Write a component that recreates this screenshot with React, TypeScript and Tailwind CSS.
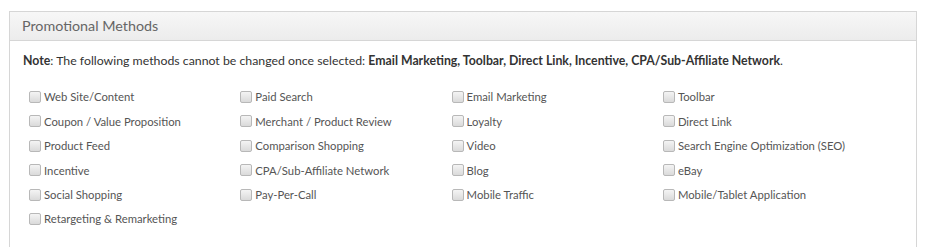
import React from "react";

const items = [
  "Web Site/Content", "Paid Search", "Email Marketing", "Toolbar",
  "Coupon / Value Proposition", "Merchant / Product Review", "Loyalty", "Direct Link",
  "Product Feed", "Comparison Shopping", "Video", "Search Engine Optimization (SEO)",
  "Incentive", "CPA/Sub-Affiliate Network", "Blog", "eBay",
  "Social Shopping", "Pay-Per-Call", "Mobile Traffic", "Mobile/Tablet Application",
  "Retargeting & Remarketing",
];

function Box() {
  return (
    <span className="inline-block w-[12px] h-[12px] rounded-[2px] border border-[#b8b8b8] bg-gradient-to-b from-[#f4f4f4] to-[#dadada] shrink-0" />
  );
}

export default function App() {
  return (
    <div className="w-[926px] h-[251px] bg-white pt-[11px] pl-[9px]" style={{ fontFamily: "Lato, 'Open Sans', sans-serif" }}>
      <div className="w-[908px] h-[236px] border border-[#d6d6d6] border-b-0">
        <div className="h-[29px] bg-gradient-to-b from-[#f7f7f7] to-[#ececec] border-b border-[#d6d6d6] flex items-center pl-[12px]">
          <span className="text-[14.3px] text-[#666] leading-none">Promotional Methods</span>
        </div>
        <div className="pl-[13px] pt-[12px] text-[12.3px] text-[#333] leading-[16px]">
          <b className="font-bold">Note</b>: The following methods cannot be changed once selected:{" "}
          <b className="font-bold">Email Marketing, Toolbar, Direct Link, Incentive, CPA/Sub-Affiliate Network</b>.
        </div>
        <div className="grid grid-cols-[211.3px_211.3px_211.3px_211.3px] pl-[19px] pt-[21px] gap-y-[10.4px]">
          {items.map((t) => (
            <label key={t} className="flex items-center gap-[3px] h-[14px] text-[11.3px] text-[#555]">
              <Box />
              <span className="leading-none">{t}</span>
            </label>
          ))}
        </div>
      </div>
    </div>
  );
}
